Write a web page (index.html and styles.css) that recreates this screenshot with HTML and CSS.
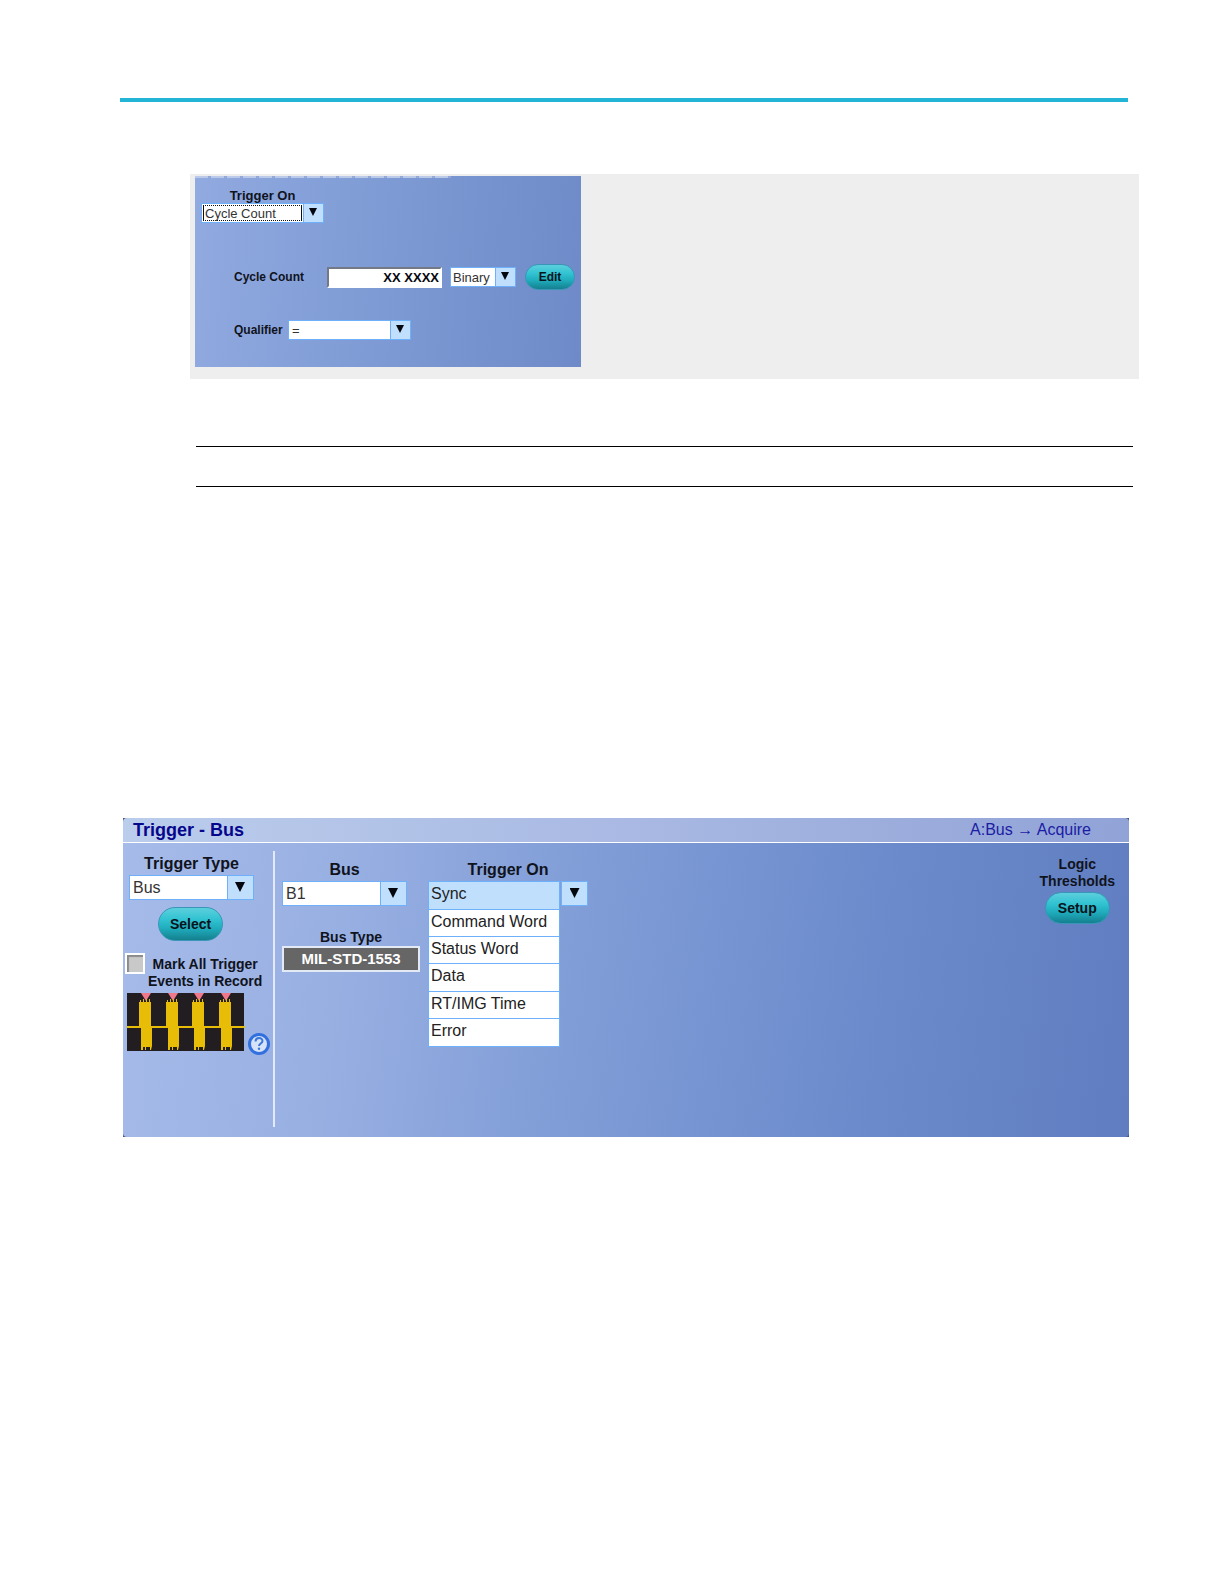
FILE: index.html
```html
<!DOCTYPE html>
<html lang="en">
<head>
    <meta charset="UTF-8">
    <meta name="viewport" content="width=device-width, initial-scale=1.0">
    <title>Trigger - Bus</title>
    <link rel="stylesheet" href="styles.css">
</head>
<body>
    <hr class="top-rule">

    <section class="figure">
        <form class="cycle-panel" autocomplete="off">
            <div class="cycle-trigger">
                <label for="cycle-on">Trigger On</label>
                <div class="select focused">
                    <select id="cycle-on"><option>Cycle Count</option></select>
                </div>
            </div>
            <div class="cycle-row">
                <label for="count">Cycle Count</label>
                <input type="text" id="count" value="XX XXXX">
                <div class="select format">
                    <select aria-label="Format"><option>Binary</option></select>
                </div>
                <button type="button" class="pill edit">Edit</button>
            </div>
            <div class="qualifier-row">
                <label for="qualifier">Qualifier</label>
                <div class="select">
                    <select id="qualifier"><option>=</option></select>
                </div>
            </div>
        </form>
    </section>

    <div class="note"></div>

    <section class="bus-panel">
        <header class="bus-header">
            <h1>Trigger - Bus</h1>
            <span>A:Bus → Acquire</span>
        </header>
        <form class="bus-body" autocomplete="off">
            <div class="type-col">
                <label class="title" for="type">Trigger Type</label>
                <div class="select large">
                    <select id="type"><option>Bus</option></select>
                </div>
                <button type="button" class="pill select-btn">Select</button>
                <div class="mark">
                    <input type="checkbox" id="mark">
                    <label for="mark">Mark All Trigger<br>Events in Record</label>
                </div>
                <div class="preview">
                    <svg width="118" height="58" viewBox="0 0 118 58" aria-hidden="true">
                        <defs>
                            <g id="burst">
                                <path fill="#f0788a" d="M2 0h10l-5 8z"/>
                                <path fill="#e8bd08" d="M0 9h1V7h1v2h2V6h1v3h2V6h1v3h2V6h1v3h1v25h1v19l-1 4h-1v-3h-2v3H9v-3H7v3H6v-3H4v3H2V34H0z"/>
                            </g>
                        </defs>
                        <rect width="117" height="58" fill="#211d20"/>
                        <path stroke="#e8bd08" stroke-width="2" d="M0 34h118"/>
                        <use href="#burst" x="12"/>
                        <use href="#burst" x="39"/>
                        <use href="#burst" x="65"/>
                        <use href="#burst" x="92"/>
                    </svg>
                    <button type="button" class="help" aria-label="Help">
                        <svg width="22" height="22" viewBox="0 0 22 22" aria-hidden="true">
                            <circle cx="11" cy="11" r="9.500" fill="#d5e2f7" stroke="#3270df" stroke-width="3"/>
                            <path fill="none" stroke="#3c78dc" stroke-width="2" d="M7.500 8.500c0-4.500 7-4.500 7-.5 0 2.500-3.500 2.500-3.500 5"/>
                            <circle cx="11" cy="15.800" r="1.200" fill="#3c78dc"/>
                        </svg>
                    </button>
                </div>
            </div>
            <div class="source-col">
                <label class="title" for="bus">Bus</label>
                <div class="select large">
                    <select id="bus"><option>B1</option></select>
                </div>
                <label class="bus-type-label" for="bus-type">Bus Type</label>
                <output id="bus-type">MIL-STD-1553</output>
            </div>
            <div class="on-col">
                <label class="title" for="on">Trigger On</label>
                <div class="open-list">
                    <select id="on" size="6">
                        <option selected>Sync</option>
                        <option>Command Word</option>
                        <option>Status Word</option>
                        <option>Data</option>
                        <option>RT/IMG Time</option>
                        <option>Error</option>
                    </select>
                    <button type="button" class="drop" aria-label="Close list"></button>
                </div>
            </div>
            <div class="logic-col">
                <span>Logic<br>Thresholds</span>
                <button type="button" class="pill setup">Setup</button>
            </div>
        </form>
    </section>
</body>
</html>
```
FILE: styles.css
```css
*,
*::before,
*::after {
    box-sizing: border-box;
}
body {
    margin: 0;
    padding: 98px 96px 120px 120px;
    background: #fff;
    color: #10131c;
    font-family: "Liberation Sans", Arial, sans-serif;
    font-size: 14px;
}
label,
.logic-col {
    font-weight: 700;
}
button,
input,
select {
    font-family: inherit;
}
.top-rule {
    height: 4px;
    margin: 0;
    border: none;
    background: #23b5d6;
}

/* Drop-downs */
.select {
    display: flex;
    position: relative;
    width: 123px;
    height: 20px;
}
.select select {
    width: 100%;
    padding: 0 22px 0 3px;
    border: 1px solid #6fb0fa;
    border-radius: 0;
    background: #fff;
    color: #333;
    font-size: 13px;
    appearance: none;
}
.select::after,
.drop::after {
    content: "";
    width: 8px;
    height: 8px;
    background: #05070f;
    clip-path: polygon(0 0, 100% 0, 50% 100%);
}
.select::before {
    content: "";
    position: absolute;
    top: 0;
    right: 0;
    width: 21px;
    height: 100%;
    border: 1px solid #6fb0fa;
    background: #c0dffd;
    pointer-events: none;
}
.select::after {
    position: absolute;
    top: 5px;
    right: 7px;
    pointer-events: none;
}
.select.large {
    width: 125px;
    height: 25px;
}
.large select {
    font-size: 16px;
}
.select.large::before {
    width: 27px;
}
.select.large::after {
    top: 7px;
    right: 9px;
    width: 10px;
    height: 10px;
}
/* dotted focus ring inside the field */
.focused select {
    outline: none;
    background:
        linear-gradient(#fff, #fff) 2px 2px / 97px 14px no-repeat,
        repeating-linear-gradient(90deg, #111 0 1px, #fff 1px 2px) 1px 1px / 99px 16px no-repeat,
        #fff;
}

/* Rounded teal buttons */
.pill {
    padding: 0;
    border: 1px solid #3a96b8;
    border-radius: 17px;
    background: linear-gradient(#5ccfdc 0%, #32c3d2 35%, #1fabbb 65%, #14808f 100%);
    color: #07141c;
    font-size: 14px;
    font-weight: 700;
}

/* Cycle count figure */
.figure {
    margin: 72px -11px 0 70px;
    padding: 2px 5px 12px;
    background: #eee;
}
.cycle-panel {
    width: 386px;
    padding: 13px 6px 27px;
    background:
        repeating-linear-gradient(90deg, #bccae9 0, #bccae9 13px, #93a8d8 13px, #93a8d8 16px) 0 0 / 256px 2px no-repeat,
        linear-gradient(95deg, #91aae0, #7d9ad4 50%, #6e8ac8);
    font-size: 12px;
}
.cycle-trigger {
    display: flex;
    flex-direction: column;
    width: 123px;
    font-size: 13px;
    line-height: 14px;
    text-align: center;
}
.cycle-row {
    display: flex;
    align-items: center;
    height: 26px;
    margin-top: 41px;
    padding-left: 33px;
}
.cycle-row label {
    width: 93px;
}
#count {
    width: 115px;
    height: 21px;
    padding: 0 1px;
    border: 2px solid;
    border-color: #747987 #fff #fff #747987;
    background: #fff;
    color: #05070f;
    font-size: 13px;
    font-weight: 700;
    text-align: right;
}
.format {
    width: 66px;
    margin: 0 9px 0 8px;
}
.format select {
    padding: 0 0 0 2px;
}
.edit {
    width: 50px;
    height: 26px;
    font-size: 12px;
}
.qualifier-row {
    display: flex;
    align-items: center;
    gap: 7px;
    margin-top: 30px;
    padding-left: 33px;
}
.qualifier-row label {
    width: 47px;
}

.note {
    height: 41px;
    margin: 67px -5px 0 76px;
    border-top: 1px solid #000;
    border-bottom: 1px solid #000;
}

/* Bus trigger panel */
.bus-panel {
    margin: 331px -1px 0 3px;
    background: #46527c;
}
.bus-header {
    display: flex;
    justify-content: space-between;
    align-items: center;
    height: 25px;
    padding: 0 38px 0 10px;
    border-bottom: 1px solid #fff;
    border-radius: 4px 4px 0 0;
    background: linear-gradient(90deg, #bbcdec, #a9b9e3 50%, #91a3d7);
    color: #1c1ca4;
    font-size: 16px;
}
.bus-header h1 {
    margin: 0;
    color: #06068c;
    font-size: 18px;
}
.bus-body {
    display: flex;
    align-items: flex-start;
    padding: 8px 14px 10px 0;
    border-radius: 0 0 4px 4px;
    background: linear-gradient(97deg, #a6bbe9 0%, #98afe2 22%, #809dd7 45%, #6b8acb 75%, #5f7dc0 100%);
}
.title {
    display: block;
    margin-bottom: 3px;
    font-size: 16px;
    line-height: 17px;
    text-align: center;
}
.type-col {
    width: 152px;
    height: 276px;
    padding: 4px 0 0 2px;
    border-right: 2px solid #e1e9fa;
}
.type-col .title,
.type-col .select {
    width: 125px;
    margin-left: 4px;
}
.select-btn {
    display: block;
    width: 65px;
    height: 34px;
    margin: 7px 0 12px 33px;
}
.mark {
    display: flex;
    align-items: flex-start;
    gap: 3px;
    height: 40px;
}
.mark input {
    flex: none;
    width: 20px;
    height: 21px;
    margin: 0;
    border: 2px solid #fff;
    background: #c9c9c9;
    box-shadow: inset 2px 2px 1px #8b8b8b;
    appearance: none;
}
.mark label {
    padding-top: 3px;
    line-height: 17px;
    text-align: center;
    white-space: nowrap;
}
.preview {
    display: flex;
    align-items: flex-end;
    gap: 3px;
    padding-left: 2px;
}
.preview svg {
    display: block;
    flex: none;
}
.help {
    margin-bottom: -4px;
    padding: 0;
    border: none;
    background: none;
}
.source-col {
    width: 138px;
    margin: 10px 8px 0 7px;
}
.source-col .title {
    width: 125px;
}
.bus-type-label {
    display: block;
    margin: 24px 0 1px;
    line-height: 15px;
    text-align: center;
}
#bus-type {
    display: block;
    height: 26px;
    border: 2px solid #e3e9f5;
    background: #666;
    color: #fff;
    font-size: 15px;
    font-weight: 700;
    line-height: 22px;
    text-align: center;
}
.on-col {
    width: 160px;
    margin-top: 10px;
}
.open-list {
    display: flex;
    align-items: flex-start;
    gap: 1px;
}
.open-list select {
    width: 132px;
    height: 166px;
    padding: 0;
    border: 1px solid #6fb0fa;
    border-radius: 0;
    background: #fff;
    font-size: 16px;
    overflow: hidden;
    outline: none;
}
.open-list option {
    height: 27px;
    min-height: 27px;
    padding: 3px 2px 0;
    border-bottom: 1px solid #6fb0fa;
    color: #222;
}
.open-list option:nth-child(3n + 1) {
    height: 28px;
}
.open-list option:last-child {
    border-bottom: none;
}
.open-list option:checked {
    background: #c0dffd linear-gradient(#c0dffd, #c0dffd);
}
.drop {
    display: flex;
    justify-content: center;
    width: 27px;
    height: 25px;
    padding: 6px 0 0;
    border: 1px solid #6fb0fa;
    background: #c0dffd;
}
.drop::after {
    width: 10px;
    height: 10px;
}
.logic-col {
    display: flex;
    flex-direction: column;
    align-items: center;
    gap: 2px;
    margin: 5px 0 0 auto;
    line-height: 17px;
    text-align: center;
}
.setup {
    width: 65px;
    height: 32px;
}
```
